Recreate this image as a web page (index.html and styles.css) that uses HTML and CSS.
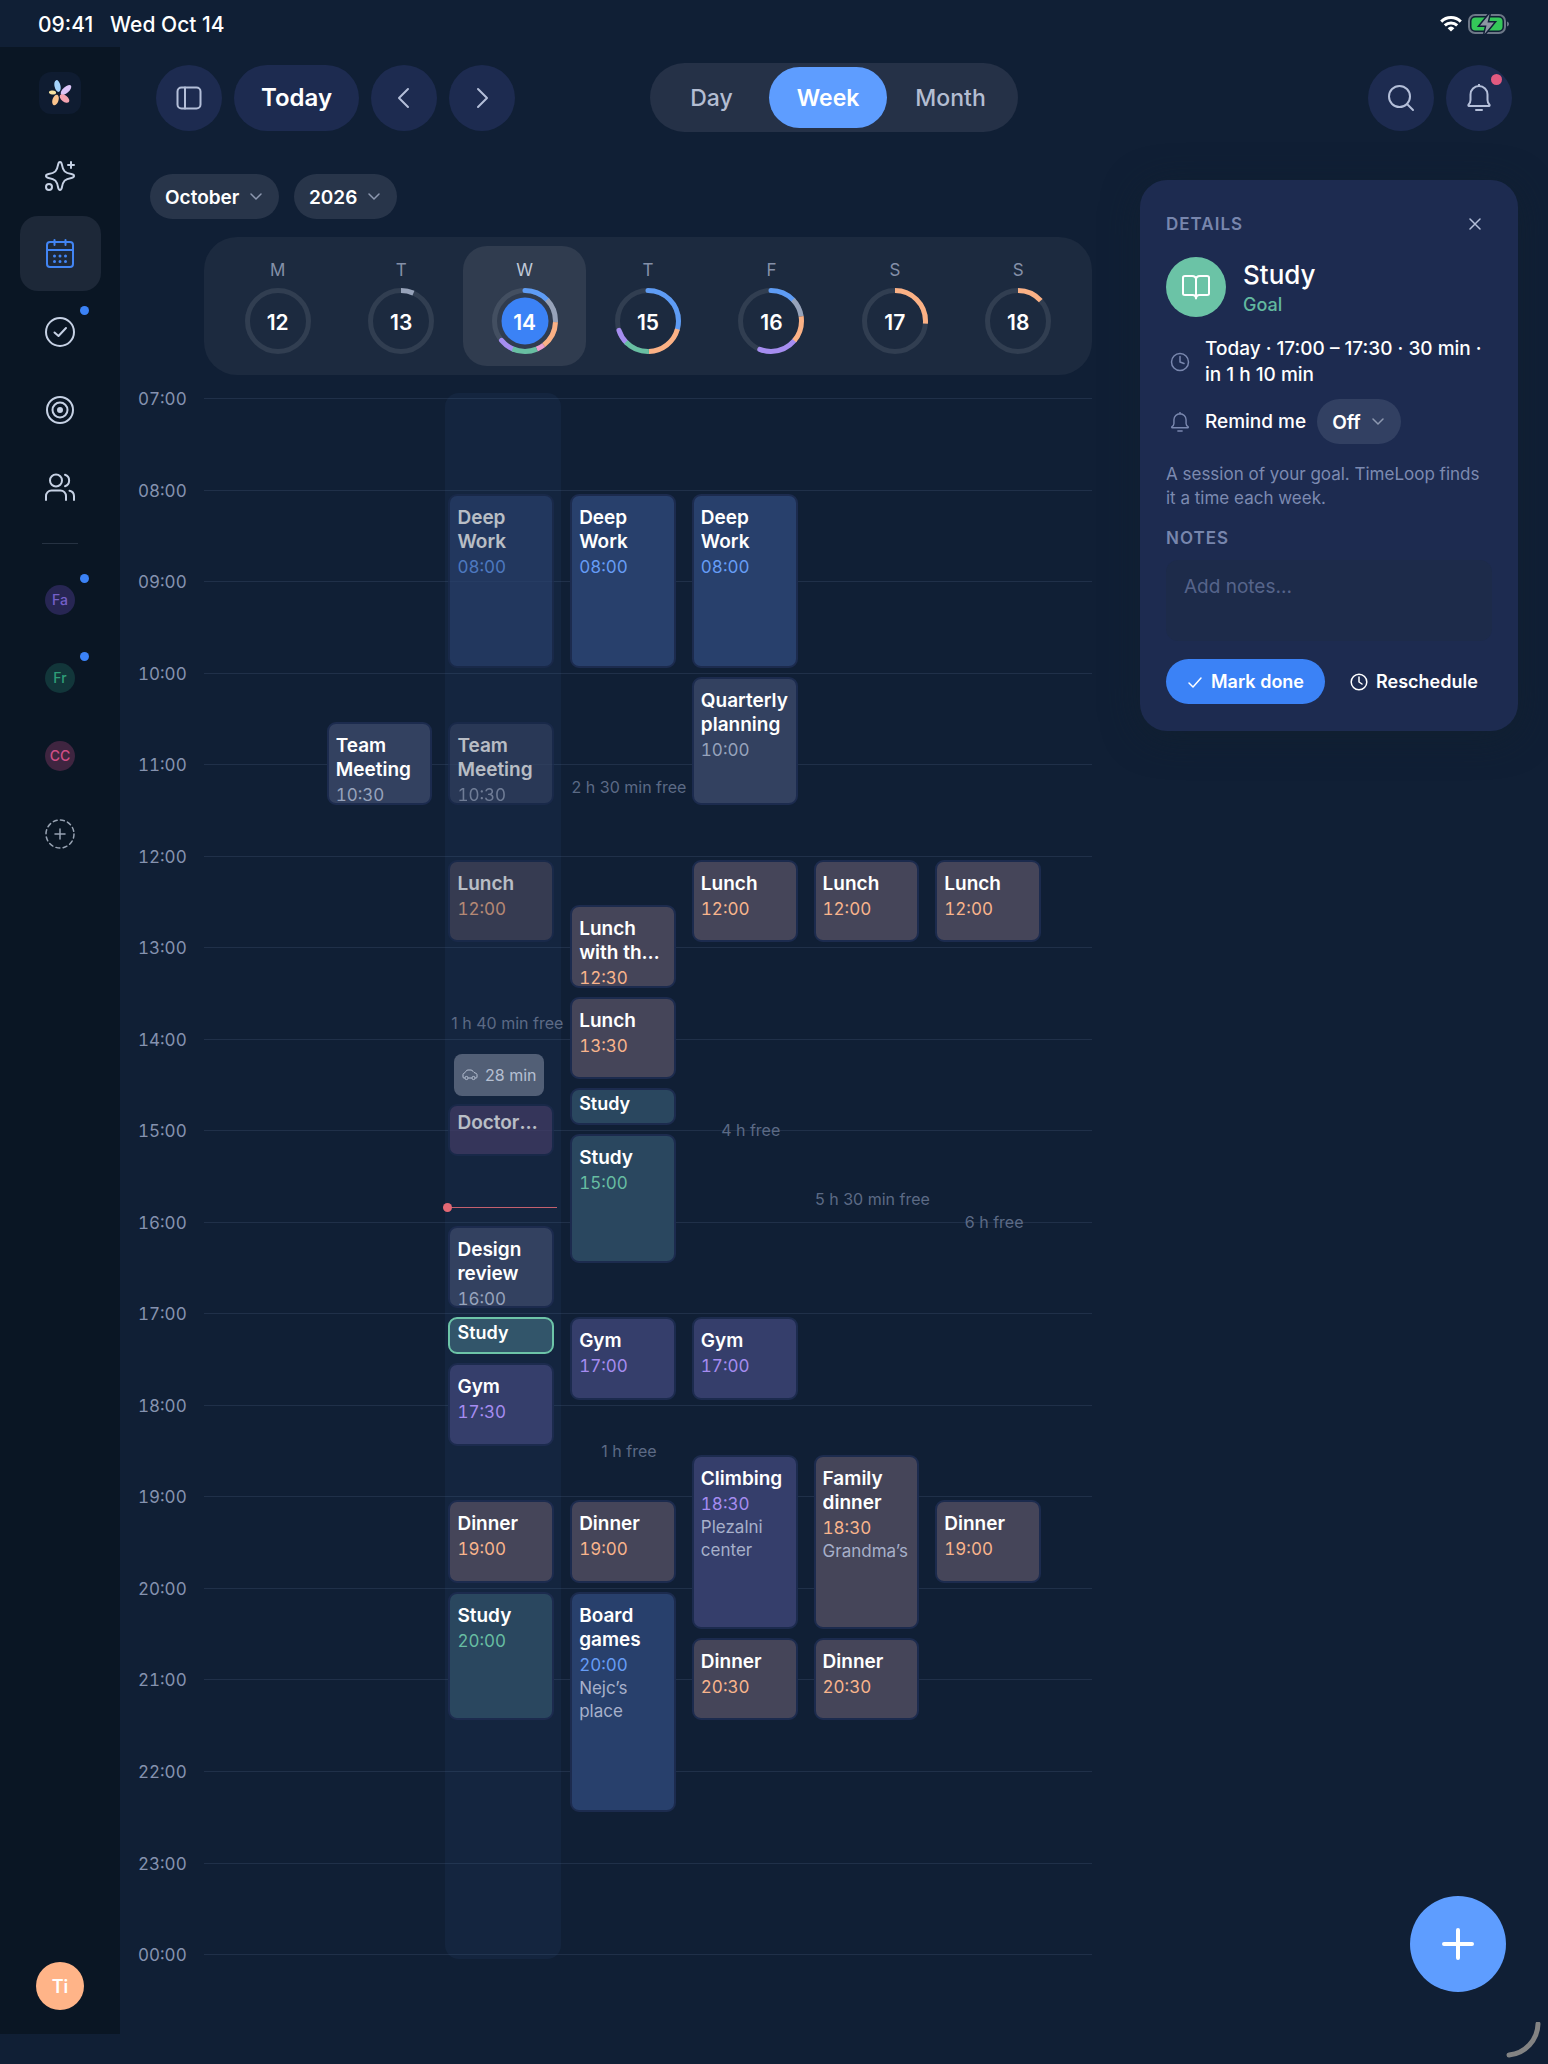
FILE: index.html
```html
<!DOCTYPE html>
<html lang="en">
<head>
<meta charset="utf-8">
<meta name="viewport" content="width=device-width, initial-scale=1">
<title>TimeLoop – Week</title>
<link rel="stylesheet" href="styles.css">
</head>
<body>
<div class="status-bar">
  <span class="status-time">09:41</span>
  <span class="status-date">Wed Oct 14</span>
  <span class="status-icons">
    <svg width="22" height="16" viewBox="0 0 22 16" fill="none" stroke="#fff" stroke-width="3" aria-label="Wi-Fi"><path d="M1.2 5.6a14 14 0 0 1 19.6 0"/><path d="M4.8 9.4a9 9 0 0 1 12.4 0"/><path d="M11 15.6 7.6 12.2a5 5 0 0 1 6.8 0z" fill="#fff" stroke="none"/></svg>
    <svg width="42" height="22" viewBox="0 0 42 22" aria-label="Battery charging"><rect x="1" y="2" width="36" height="18" rx="6" fill="none" stroke="#6d7787" stroke-width="2"/><rect x="3.500" y="4.500" width="31" height="13" rx="4" fill="#34c759"/><path d="M39 8.500v5c1.300-.5 2-1.400 2-2.500s-.7-2-2-2.500z" fill="#6d7787"/><path d="M21.500 1 12 12.500h6.500L16.500 21 26 9.500h-6.500z" fill="#8d96a3" stroke="#111f37" stroke-width="3" paint-order="stroke"/></svg>
  </span>
</div>

<div class="app">
  <nav class="sidebar" aria-label="Main">
    <a class="logo" href="#" aria-label="TimeLoop">
      <svg width="26" height="26" viewBox="0 0 26 26"><ellipse cx="10.500" cy="6" rx="3" ry="6" transform="rotate(-12 10.500 6)" fill="#a5d3fb"/><ellipse cx="19" cy="10" rx="6.600" ry="3" transform="rotate(-42 19 10)" fill="#dcc4f6"/><ellipse cx="17.500" cy="18.500" rx="5.600" ry="3.200" transform="rotate(38 17.500 18.500)" fill="#f4a3b0"/><ellipse cx="8.500" cy="20" rx="3" ry="5.400" transform="rotate(18 8.500 20)" fill="#fbc48d"/><ellipse cx="5.500" cy="12.500" rx="3.600" ry="2" transform="rotate(8 5.500 12.500)" fill="#f6e3a1"/></svg>
    </a>
    <a class="nav-item" href="#" aria-label="Assistant">
      <svg class="icon" width="32" height="32" viewBox="0 0 32 32"><path d="M16 2c1.200 0 1.600 1 1.900 2.600 1.100 6.400 3 8.400 9.500 9.500 1.600.3 2.600.7 2.600 1.900s-1 1.600-2.600 1.900c-6.500 1.100-8.400 3.100-9.500 9.500C17.600 29 17.200 30 16 30s-1.600-1-1.900-2.600c-1.100-6.400-3-8.400-9.500-9.500C3 17.600 2 17.200 2 16s1-1.600 2.600-1.900c6.500-1.100 8.400-3.100 9.500-9.500C14.400 3 14.800 2 16 2z"/><path d="M27 2v6M24 5h6"/><circle cx="5" cy="27" r="3"/></svg>
    </a>
    <a class="nav-item is-active" href="#" aria-label="Calendar" aria-current="page">
      <svg class="icon" width="32" height="32" viewBox="0 0 32 32"><rect x="3" y="4" width="26" height="25" rx="3"/><path d="M3 12h26M10.500 2v5M21.500 2v5"/><path stroke-width="3" d="M10.500 18h0M16 18h0M21.500 18h0M10.500 23.500h0M16 23.500h0M21.500 23.500h0"/></svg>
    </a>
    <a class="nav-item" href="#" aria-label="Tasks">
      <svg class="icon" width="32" height="32" viewBox="0 0 32 32"><circle cx="16" cy="16" r="14"/><path d="m10.500 16.500 4 3.500 7.500-8"/></svg>
      <span class="dot"></span>
    </a>
    <a class="nav-item" href="#" aria-label="Goals">
      <svg class="icon" width="32" height="32" viewBox="0 0 32 32"><circle cx="16" cy="16" r="13"/><circle cx="16" cy="16" r="7.500"/><circle cx="16" cy="16" r="2" fill="currentColor"/></svg>
    </a>
    <a class="nav-item" href="#" aria-label="People">
      <svg class="icon" width="32" height="32" viewBox="0 0 32 32"><circle cx="12" cy="8.500" r="6"/><path d="M2 28v-4a5.500 5.500 0 0 1 5.500-5.500h9A5.500 5.500 0 0 1 22 24v4M21 2.800a6 6 0 0 1 0 11.400M25.500 18.700A5.500 5.500 0 0 1 30 24v4"/></svg>
    </a>
    <hr class="divider">
    <a class="nav-item" href="#"><span class="group group--purple">Fa</span><span class="dot"></span></a>
    <a class="nav-item" href="#"><span class="group group--green">Fr</span><span class="dot"></span></a>
    <a class="nav-item" href="#"><span class="group group--pink">CC</span></a>
    <button class="nav-item nav-item--add" type="button" aria-label="Add group">
      <svg class="icon icon--thin" width="32" height="32" viewBox="0 0 32 32"><circle cx="16" cy="16" r="14" stroke-dasharray="4 3.330"/><path d="M16 11v10M11 16h10"/></svg>
    </button>
    <a class="avatar" href="#">Ti</a>
  </nav>

  <main class="main">
    <header class="toolbar">
      <div class="toolbar-group">
        <button class="round-btn" type="button" aria-label="Toggle sidebar"><svg class="icon" width="26" height="26" viewBox="0 0 26 26"><rect x="1.500" y="2.500" width="23" height="21" rx="4"/><path d="M9 2.500v21"/></svg></button>
        <button class="round-btn round-btn--text" type="button">Today</button>
        <button class="round-btn" type="button" aria-label="Previous week"><svg class="icon" width="26" height="26" viewBox="0 0 26 26"><path d="m17 4-9 9 9 9"/></svg></button>
        <button class="round-btn" type="button" aria-label="Next week"><svg class="icon" width="26" height="26" viewBox="0 0 26 26"><path d="m9 4 9 9-9 9"/></svg></button>
      </div>
      <div class="segmented" role="group" aria-label="View">
        <button type="button">Day</button>
        <button type="button" class="is-selected" aria-pressed="true">Week</button>
        <button type="button">Month</button>
      </div>
      <div class="toolbar-group toolbar-group--end">
        <button class="round-btn" type="button" aria-label="Search"><svg class="icon" width="28" height="28" viewBox="0 0 28 28"><circle cx="12.500" cy="12.500" r="10.500"/><path d="m20 20 6 6"/></svg></button>
        <button class="round-btn" type="button" aria-label="Notifications"><svg class="icon" width="28" height="28" viewBox="0 0 28 28"><path d="M14 0v2M4 22h20c.7 0 .8-.8.400-1.300C23 19 22.500 17.500 22.500 16v-5.500a8.500 8.500 0 0 0-17 0V16c0 1.500-.5 3-1.900 4.700-.4.500-.3 1.300.4 1.300zM11 26h6"/></svg><span class="alert-dot"></span></button>
      </div>
    </header>

    <div class="content">
      <section class="calendar" aria-label="Week calendar">
        <div class="period">
          <span class="select select--month"><select aria-label="Month"><option>October</option></select><svg class="chevron" width="12" height="8" viewBox="0 0 12 8"><path d="m1 1 5 5 5-5"/></svg></span>
          <span class="select select--year"><select aria-label="Year"><option>2026</option></select><svg class="chevron" width="12" height="8" viewBox="0 0 12 8"><path d="m1 1 5 5 5-5"/></svg></span>
        </div>

        <div class="week-strip">
          <button class="day" type="button"><span class="day-name">M</span><span class="ring"><svg viewBox="0 0 66 66"><circle class="track" cx="33" cy="33" r="30.500"/></svg><span class="day-num">12</span></span></button>
          <button class="day" type="button"><span class="day-name">T</span><span class="ring"><svg viewBox="0 0 66 66"><circle class="track" cx="33" cy="33" r="30.500"/><circle class="arc grey" cx="33" cy="33" r="30.500" pathLength="1000" stroke-dasharray="67 933"/></svg><span class="day-num">13</span></span></button>
          <button class="day is-today" type="button" aria-current="date"><span class="day-name">W</span><span class="ring"><svg viewBox="0 0 66 66"><circle class="track" cx="33" cy="33" r="30.500"/><circle class="arc blue round" cx="33" cy="33" r="30.500" pathLength="1000" stroke-dasharray="128 872"/><circle class="arc purple round" cx="33" cy="33" r="30.500" pathLength="1000" stroke-dasharray="80 920" stroke-dashoffset="-560"/><circle class="arc grey" cx="33" cy="33" r="30.500" pathLength="1000" stroke-dasharray="128 872" stroke-dashoffset="-128"/><circle class="arc orange" cx="33" cy="33" r="30.500" pathLength="1000" stroke-dasharray="139 861" stroke-dashoffset="-256"/><circle class="arc pink" cx="33" cy="33" r="30.500" pathLength="1000" stroke-dasharray="42 958" stroke-dashoffset="-395"/><circle class="arc green" cx="33" cy="33" r="30.500" pathLength="1000" stroke-dasharray="130 870" stroke-dashoffset="-437"/><circle cx="33" cy="33" r="23.500" fill="#3b82f6"/></svg><span class="day-num">14</span></span></button>
          <button class="day" type="button"><span class="day-name">T</span><span class="ring"><svg viewBox="0 0 66 66"><circle class="track" cx="33" cy="33" r="30.500"/><circle class="arc blue round" cx="33" cy="33" r="30.500" pathLength="1000" stroke-dasharray="293 707"/><circle class="arc purple round" cx="33" cy="33" r="30.500" pathLength="1000" stroke-dasharray="76 924" stroke-dashoffset="-624"/><circle class="arc orange" cx="33" cy="33" r="30.500" pathLength="1000" stroke-dasharray="202 798" stroke-dashoffset="-293"/><circle class="arc green" cx="33" cy="33" r="30.500" pathLength="1000" stroke-dasharray="134 866" stroke-dashoffset="-495"/></svg><span class="day-num">15</span></span></button>
          <button class="day" type="button"><span class="day-name">F</span><span class="ring"><svg viewBox="0 0 66 66"><circle class="track" cx="33" cy="33" r="30.500"/><circle class="arc blue round" cx="33" cy="33" r="30.500" pathLength="1000" stroke-dasharray="128 872"/><circle class="arc purple round" cx="33" cy="33" r="30.500" pathLength="1000" stroke-dasharray="198 802" stroke-dashoffset="-362"/><circle class="arc grey" cx="33" cy="33" r="30.500" pathLength="1000" stroke-dasharray="98 902" stroke-dashoffset="-128"/><circle class="arc orange" cx="33" cy="33" r="30.500" pathLength="1000" stroke-dasharray="136 864" stroke-dashoffset="-226"/></svg><span class="day-num">16</span></span></button>
          <button class="day" type="button"><span class="day-name">S</span><span class="ring"><svg viewBox="0 0 66 66"><circle class="track" cx="33" cy="33" r="30.500"/><circle class="arc orange" cx="33" cy="33" r="30.500" pathLength="1000" stroke-dasharray="264 736"/></svg><span class="day-num">17</span></span></button>
          <button class="day" type="button"><span class="day-name">S</span><span class="ring"><svg viewBox="0 0 66 66"><circle class="track" cx="33" cy="33" r="30.500"/><circle class="arc orange" cx="33" cy="33" r="30.500" pathLength="1000" stroke-dasharray="134 866"/></svg><span class="day-num">18</span></span></button>
        </div>

        <div class="timeline">
          <div class="hours">
            <div class="hour"><span>07:00</span></div><div class="hour"><span>08:00</span></div><div class="hour"><span>09:00</span></div><div class="hour"><span>10:00</span></div><div class="hour"><span>11:00</span></div><div class="hour"><span>12:00</span></div><div class="hour"><span>13:00</span></div><div class="hour"><span>14:00</span></div><div class="hour"><span>15:00</span></div><div class="hour"><span>16:00</span></div><div class="hour"><span>17:00</span></div><div class="hour"><span>18:00</span></div><div class="hour"><span>19:00</span></div><div class="hour"><span>20:00</span></div><div class="hour"><span>21:00</span></div><div class="hour"><span>22:00</span></div><div class="hour"><span>23:00</span></div><div class="hour hour--end"><span>00:00</span></div>
          </div>

          <div class="days">
            <div class="column"></div>

            <div class="column">
              <article class="event grey" style="--from:43;--to:55"><h3>Team Meeting</h3><time>10:30</time></article>
            </div>

            <div class="column column--today">
              <article class="event blue past" style="--from:13;--to:37"><h3>Deep Work</h3><time>08:00</time></article>
              <article class="event grey past" style="--from:43;--to:55"><h3>Team Meeting</h3><time>10:30</time></article>
              <article class="event orange past" style="--from:61;--to:73"><h3>Lunch</h3><time>12:00</time></article>
              <p class="free" style="--from:80;--to:86">1 h 40 min free</p>
              <div class="travel" style="--from:87;--to:93"><svg width="16" height="12" viewBox="0 0 16 12"><path d="M2.700 9H1.800C1.200 9 1 8.600 1 8V5.500C1 4 3 4.500 4 2.200 4.300 1.400 5 1 6 1h3c1.500 0 2.500 2.500 4 3 1.500.3 2 .8 2 2V8c0 .6-.2 1-.8 1h-.9M6.300 9h3.400"/><circle cx="4.500" cy="9" r="1.600"/><circle cx="11.500" cy="9" r="1.600"/></svg>28 min</div>
              <article class="event pink past event--mid" style="--from:93;--to:101"><h3>Doctor appointment</h3></article>
              <div class="now" style="--from:107;--to:108"></div>
              <article class="event grey" style="--from:109;--to:121"><h3>Design review</h3><time>16:00</time></article>
              <article class="event green event--short is-selected" style="--from:121;--to:127"><h3>Study</h3></article>
              <article class="event purple" style="--from:127;--to:139"><h3>Gym</h3><time>17:30</time></article>
              <article class="event orange" style="--from:145;--to:157"><h3>Dinner</h3><time>19:00</time></article>
              <article class="event green" style="--from:157;--to:175"><h3>Study</h3><time>20:00</time></article>
            </div>

            <div class="column">
              <article class="event blue" style="--from:13;--to:37"><h3>Deep Work</h3><time>08:00</time></article>
              <p class="free" style="--from:49;--to:55">2 h 30 min free</p>
              <article class="event orange" style="--from:67;--to:79"><h3>Lunch with the team</h3><time>12:30</time></article>
              <article class="event orange" style="--from:79;--to:91"><h3>Lunch</h3><time>13:30</time></article>
              <article class="event green event--short" style="--from:91;--to:97"><h3>Study</h3></article>
              <article class="event green" style="--from:97;--to:115"><h3>Study</h3><time>15:00</time></article>
              <article class="event purple" style="--from:121;--to:133"><h3>Gym</h3><time>17:00</time></article>
              <p class="free" style="--from:136;--to:142">1 h free</p>
              <article class="event orange" style="--from:145;--to:157"><h3>Dinner</h3><time>19:00</time></article>
              <article class="event blue" style="--from:157;--to:187"><h3>Board games</h3><time>20:00</time><p>Nejc’s place</p></article>
            </div>

            <div class="column">
              <article class="event blue" style="--from:13;--to:37"><h3>Deep Work</h3><time>08:00</time></article>
              <article class="event grey" style="--from:37;--to:55"><h3>Quarterly planning</h3><time>10:00</time></article>
              <article class="event orange" style="--from:61;--to:73"><h3>Lunch</h3><time>12:00</time></article>
              <p class="free" style="--from:94;--to:100">4 h free</p>
              <article class="event purple" style="--from:121;--to:133"><h3>Gym</h3><time>17:00</time></article>
              <article class="event purple" style="--from:139;--to:163"><h3>Climbing</h3><time>18:30</time><p>Plezalni center</p></article>
              <article class="event orange" style="--from:163;--to:175"><h3>Dinner</h3><time>20:30</time></article>
            </div>

            <div class="column">
              <article class="event orange" style="--from:61;--to:73"><h3>Lunch</h3><time>12:00</time></article>
              <p class="free" style="--from:103;--to:109">5 h 30 min free</p>
              <article class="event orange" style="--from:139;--to:163"><h3>Family dinner</h3><time>18:30</time><p>Grandma’s</p></article>
              <article class="event orange" style="--from:163;--to:175"><h3>Dinner</h3><time>20:30</time></article>
            </div>

            <div class="column">
              <article class="event orange" style="--from:61;--to:73"><h3>Lunch</h3><time>12:00</time></article>
              <p class="free" style="--from:106;--to:112">6 h free</p>
              <article class="event orange" style="--from:145;--to:157"><h3>Dinner</h3><time>19:00</time></article>
            </div>
          </div>
        </div>
      </section>

      <aside class="details">
        <div class="details-head">
          <h2 class="overline">Details</h2>
          <button class="close" type="button" aria-label="Close"><svg class="icon" width="12" height="12" viewBox="0 0 12 12"><path d="m1 1 10 10M11 1 1 11"/></svg></button>
        </div>
        <div class="details-title">
          <span class="badge"><svg class="icon" width="28" height="28" viewBox="0 0 28 28"><path d="M14 6.500C14 4 12 3 10 3H3c-1 0-2 .5-2 1.500v16c0 1 .8 1.500 2 1.500h7.500c2 0 3.500 1 3.500 3.500 0-2.500 1.500-3.500 3.500-3.500H25c1.200 0 2-.5 2-1.500v-16C27 3.500 26 3 25 3h-7c-2 0-4 1-4 3.500zV25"/></svg></span>
          <div><h1>Study</h1><p class="kind">Goal</p></div>
        </div>
        <div class="row">
          <svg class="icon icon--thin row-icon" width="20" height="20" viewBox="0 0 20 20"><circle cx="10" cy="10" r="8.500"/><path d="M10 4.500V10l4 1.500"/></svg>
          <p>Today · 17:00 – 17:30 · 30 min · in 1 h 10 min</p>
        </div>
        <div class="row row--remind">
          <svg class="icon icon--thin row-icon" width="20" height="20" viewBox="0 0 28 28"><path stroke-width="2" d="M14 0v3M3 22h22c.7 0 .8-.8.400-1.300C23 19 22.500 17.500 22.500 16v-5a8.500 8.500 0 0 0-17 0v5c0 1.500-.5 3-2.900 4.700-.4.500-.3 1.300.4 1.300zM11 26.500h6"/></svg>
          <label for="remind">Remind me</label>
          <span class="select select--remind"><select id="remind"><option>Off</option></select><svg class="chevron" width="12" height="8" viewBox="0 0 12 8"><path d="m1 1 5 5 5-5"/></svg></span>
        </div>
        <p class="hint">A session of your goal. TimeLoop finds it a time each week.</p>
        <label class="overline overline--notes" for="notes">Notes</label>
        <textarea id="notes" placeholder="Add notes..."></textarea>
        <div class="actions">
          <button class="btn btn--primary" type="button"><svg class="icon" width="16" height="16" viewBox="0 0 16 16"><path d="m2 9 4 4 8-9"/></svg>Mark done</button>
          <button class="btn" type="button"><svg class="icon" width="18" height="18" viewBox="0 0 18 18"><circle cx="9" cy="9" r="7.800"/><path d="M9 4v5l3 2"/></svg>Reschedule</button>
        </div>
      </aside>
    </div>
  </main>
</div>

<button class="fab" type="button" aria-label="New event"><svg width="34" height="34" viewBox="0 0 34 34"><path d="M17 3v28M3 17h28"/></svg></button>
<svg class="corner" width="42" height="42" viewBox="0 0 42 42" aria-hidden="true"><path d="M32 2A32 32 0 0 1 3 33"/></svg>
</body>
</html>
```
FILE: styles.css
```css
* {
  box-sizing: border-box;
}

:root {
  --bg: #101f35;
  --surface: #1d2b50;
  --text: #fff;
  --soft: #b4bfd9;
  --muted: #8592af;
  --accent: #5e9dff;
}

body {
  margin: 0;
  min-height: 100vh;
  display: flex;
  flex-direction: column;
  padding-bottom: 30px;
  background: var(--bg);
  color: var(--text);
  font-family: Inter, "Liberation Sans", sans-serif;
  font-size: 18px;
}

h1, h2, h3, p {
  margin: 0;
  font-weight: 500;
}

button, select, textarea {
  font: inherit;
  color: inherit;
  border: 0;
  background: none;
  padding: 0;
  margin: 0;
}

a {
  color: inherit;
  text-decoration: none;
}

.icon {
  display: block;
  flex: none;
  fill: none;
  stroke: currentColor;
  stroke-width: 2;
  stroke-linecap: round;
  stroke-linejoin: round;
}

.icon--thin {
  stroke-width: 1.5;
}

/* Status bar */
.status-bar {
  height: 47px;
  flex: none;
  display: flex;
  align-items: center;
  gap: 17px;
  padding: 1px 38px 0;
  font-size: 21px;
  font-weight: 500;
}

.status-icons {
  margin-left: auto;
  display: flex;
  align-items: center;
  gap: 6px;
}

.app {
  flex: 1;
  display: flex;
}

/* Sidebar */
.sidebar {
  width: 120px;
  flex: none;
  display: flex;
  flex-direction: column;
  align-items: center;
  gap: 3px;
  padding: 25px 0 24px;
  background: #0a1624;
  color: #c6d1e4;
}

.logo {
  width: 42px;
  height: 42px;
  margin-bottom: 21px;
  display: grid;
  place-items: center;
  border-radius: 12px;
  background: #0f1c31;
}

.nav-item {
  position: relative;
  width: 81px;
  height: 75px;
  display: grid;
  place-items: center;
  border-radius: 18px;
}

.nav-item.is-active {
  background: #1d2838;
  color: #4285f4;
}

.nav-item--add {
  color: #98a3b3;
}

.dot {
  position: absolute;
  top: 12px;
  right: 12px;
  width: 9px;
  height: 9px;
  border-radius: 50%;
  background: #3b82f6;
}

.divider {
  width: 36px;
  height: 1px;
  margin: 15px 0;
  border: 0;
  background: #263242;
}

.group {
  width: 30px;
  height: 30px;
  display: grid;
  place-items: center;
  border-radius: 50%;
  font-size: 14px;
  font-weight: 500;
}

.group--purple { background: #272653; color: #7560c8; }
.group--green { background: #12363a; color: #2f9e78; }
.group--pink { background: #3f2540; color: #cf4f87; }

.avatar {
  width: 48px;
  height: 48px;
  margin-top: auto;
  display: grid;
  place-items: center;
  border-radius: 50%;
  background: #ffb488;
  color: #fff;
  font-size: 18px;
  font-weight: 600;
}

/* Toolbar */
.main {
  flex: 1;
  min-width: 0;
  display: flex;
  flex-direction: column;
  gap: 42px;
  padding: 16px 30px 0 18px;
}

.toolbar {
  display: grid;
  grid-template-columns: 1fr auto 1fr;
  align-items: center;
  padding: 0 6px 0 18px;
}

.toolbar-group {
  display: flex;
  gap: 12px;
}

.toolbar-group--end {
  justify-content: flex-end;
}

.round-btn {
  position: relative;
  width: 66px;
  height: 66px;
  display: grid;
  place-items: center;
  border-radius: 33px;
  background: var(--surface);
  color: var(--soft);
}

.round-btn--text {
  width: 125px;
  color: var(--text);
  font-size: 24px;
  font-weight: 600;
}

.alert-dot {
  position: absolute;
  top: 9px;
  right: 10px;
  width: 11px;
  height: 11px;
  border-radius: 50%;
  background: #e25a80;
}

.segmented {
  display: flex;
  padding: 4px;
  border-radius: 35px;
  background: #253147;
  color: #b3bdd2;
  font-size: 23px;
  font-weight: 500;
}

.segmented button {
  height: 61px;
  padding: 0 28px;
  border-radius: 31px;
}

.segmented button:first-child {
  padding-left: 36px;
  padding-right: 36px;
}

.segmented .is-selected {
  background: var(--accent);
  color: #fff;
  font-weight: 600;
}

.content {
  flex: 1;
  display: grid;
  grid-template-columns: minmax(0, 1fr) 378px;
  gap: 48px;
}

/* Calendar */
.calendar {
  display: flex;
  flex-direction: column;
  padding-bottom: 80px;
}

.period {
  display: flex;
  gap: 15px;
  margin: 0 0 18px 12px;
}

.select {
  position: relative;
  display: block;
}

.select select {
  width: 100%;
  height: 45px;
  padding: 2px 0 0 15px;
  appearance: none;
  border-radius: 23px;
  background: #28354a;
  font-size: 19px;
  font-weight: 600;
}

.select--month { width: 129px; }
.select--year { width: 103px; }
.select--remind { width: 84px; }
.select--remind select { background: #324062; }

.chevron {
  position: absolute;
  top: 19px;
  right: 17px;
  pointer-events: none;
  fill: none;
  stroke: #8d98b0;
  stroke-width: 1.5;
  stroke-linecap: round;
}

.week-strip {
  display: grid;
  grid-template-columns: repeat(7, minmax(0, 1fr));
  margin: 0 0 23px 66px;
  padding: 9px 12px;
  border-radius: 33px;
  background: #1c2a3f;
}

.day {
  height: 120px;
  display: flex;
  flex-direction: column;
  align-items: center;
  gap: 6px;
  padding-top: 12px;
  border-radius: 24px;
}

.day.is-today {
  background: #303c4f;
}

.day-name {
  font-size: 17px;
  line-height: 24px;
  color: #8490a8;
}

.is-today .day-name {
  color: #c0c9d8;
}

.ring {
  width: 66px;
  height: 66px;
  display: grid;
}

.ring > * {
  grid-area: 1 / 1;
  place-self: center;
}

.ring svg {
  width: 66px;
  height: 66px;
}

.day-num {
  padding-top: 2px;
  font-size: 21px;
  font-weight: 600;
}

.track, .arc {
  fill: none;
  stroke-width: 5;
}

.track { stroke: #313e51; }
.is-today .track { stroke: #434f61; }

.arc {
  transform: rotate(-90deg);
  transform-origin: 33px 33px;
}

.arc.round { stroke-linecap: round; }
.arc.blue { stroke: #5e9cf5; }
.arc.grey { stroke: #97a3ba; }
.arc.orange { stroke: #fbb185; }
.arc.pink { stroke: #ec9fd0; }
.arc.green { stroke: #68bfa2; }
.arc.purple { stroke: #a58df0; }

/* Timeline: 17 hours, each split into 12 five-minute rows */
.timeline {
  flex: 1;
  min-height: 1360px;
  display: grid;
}

.timeline > * {
  grid-area: 1 / 1;
  min-height: 0;
}

.hours {
  display: flex;
  flex-direction: column;
}

.hour {
  flex: 1 1 0;
  display: flex;
  align-items: flex-start;
  gap: 18px;
  font-size: 17px;
  line-height: 24px;
  font-variant-numeric: tabular-nums;
  color: var(--muted);
}

.hour::after {
  content: "";
  flex: 1;
  height: 1px;
  background: #203049;
}

.hour span {
  width: 48px;
  margin-top: -11px;
}

.hour--end {
  flex: none;
  height: 0;
}

.days {
  display: grid;
  grid-template-columns: repeat(7, minmax(0, 1fr));
  margin: 0 36px 0 66px;
}

.column {
  contain: size;
  display: grid;
  grid-template-columns: 100%;
  grid-template-rows: repeat(204, minmax(0, 1fr));
}

.column > * {
  grid-column: 1;
  grid-row: var(--from) / var(--to);
}

.column--today::before {
  content: "";
  grid-column: 1;
  grid-row: 1 / -1;
  margin: -5px 8px -5px -2px;
  border-radius: 14px;
  background: rgba(56, 98, 155, 0.1);
}

.event {
  overflow: hidden;
  margin: 4px 15px 5px 1px;
  padding: 10px 4px 0 7px;
  border: 2px solid #1c2b4e;
  border-radius: 9px;
  background: var(--fill);
  font-size: 17px;
}

.event h3 {
  display: -webkit-box;
  -webkit-box-orient: vertical;
  -webkit-line-clamp: 2;
  overflow: hidden;
  font-size: 19px;
  line-height: 24px;
  font-weight: 600;
}

.event time {
  display: block;
  margin-top: 1px;
  line-height: 24px;
  font-variant-numeric: tabular-nums;
  color: var(--ink);
}

.event p {
  line-height: 23px;
  font-weight: 400;
  color: #a7b0ca;
}

.event.blue { --fill: #28406c; --ink: #669cf5; }
.event.grey { --fill: #334160; --ink: #97a3bc; }
.event.orange { --fill: #454559; --ink: #f8b48c; }
.event.green { --fill: #2a475f; --ink: #67bda2; }
.event.purple { --fill: #353e6b; --ink: #a58cf0; }
.event.pink { --fill: #443c66; --ink: #ec9fd0; }

.event.past {
  opacity: 0.7;
}

.event--mid {
  padding-top: 5px;
}

.event--short {
  padding-top: 2px;
}

.event--mid h3, .event--short h3 {
  -webkit-line-clamp: 1;
}

.event--short h3 {
  font-size: 18px;
}

.event.is-selected {
  background: #32556a;
  border-color: #6dc4a8;
}

.free {
  place-self: center;
  margin-right: 2px;
  white-space: nowrap;
  font-size: 16px;
  line-height: 24px;
  font-weight: 400;
  color: #5c6a85;
}

.travel {
  display: flex;
  align-items: center;
  justify-content: center;
  gap: 7px;
  margin: 0 25px 4px 7px;
  border-radius: 8px;
  background: #525f76;
  color: #b6c0d2;
  font-size: 16px;
  white-space: nowrap;
}

.travel svg {
  fill: none;
  stroke: currentColor;
  stroke-width: 1;
}

.now {
  height: 1px;
  margin: 0 12px 0 0;
  background: #c4606e;
}

.now::before {
  content: "";
  display: block;
  width: 9px;
  height: 9px;
  margin: -4px 0 0 -4px;
  border-radius: 50%;
  background: #e46874;
}

/* Details card */
.details {
  align-self: start;
  display: flex;
  flex-direction: column;
  margin-top: 6px;
  padding: 27px 26px;
  border-radius: 27px;
  background: var(--surface);
  box-shadow: 0 6px 36px rgba(17, 33, 48, 0.8);
}

.details-head {
  display: flex;
  align-items: center;
  justify-content: space-between;
}

.overline {
  font-size: 17px;
  line-height: 24px;
  font-weight: 600;
  letter-spacing: 1px;
  text-transform: uppercase;
  color: #7886ad;
}

.close {
  width: 34px;
  height: 34px;
  display: grid;
  place-items: center;
  border-radius: 50%;
  color: var(--soft);
}

.close .icon {
  stroke-width: 1.5;
}

.details-title {
  display: flex;
  align-items: center;
  gap: 17px;
  margin-top: 16px;
}

.badge {
  width: 60px;
  height: 60px;
  display: grid;
  place-items: center;
  border-radius: 50%;
  background: #6bc3a6;
}

h1 {
  font-size: 26px;
  line-height: 36px;
}

.kind {
  font-size: 18px;
  line-height: 24px;
  color: #62b89f;
}

.row {
  display: flex;
  align-items: center;
  gap: 15px;
  margin-top: 19px;
  padding-left: 4px;
  font-size: 19px;
  line-height: 26px;
  font-weight: 500;
}

.row p {
  flex: 1;
}

.row-icon {
  color: #7987ae;
}

.row--remind {
  margin-top: 11px;
}

.row--remind .select {
  margin-left: -4px;
}

.hint {
  margin-top: 18px;
  font-size: 17px;
  line-height: 24px;
  font-weight: 400;
  color: #7c8ab0;
}

.overline--notes {
  margin-top: 16px;
}

textarea {
  height: 81px;
  margin-top: 10px;
  padding: 14px 18px;
  resize: none;
  border-radius: 12px;
  background: #1d2b4a;
  font-size: 19px;
  line-height: 26px;
}

textarea::placeholder {
  color: #56648a;
}

.actions {
  display: flex;
  gap: 4px;
  margin-top: 18px;
}

.btn {
  height: 45px;
  display: flex;
  align-items: center;
  gap: 8px;
  padding: 0 21px;
  border-radius: 23px;
  font-size: 18px;
  font-weight: 600;
  white-space: nowrap;
}

.btn--primary {
  background: #3b82f6;
}

.btn .icon {
  stroke-width: 1.5;
}

.fab {
  position: fixed;
  right: 42px;
  bottom: 72px;
  width: 96px;
  height: 96px;
  display: grid;
  place-items: center;
  border-radius: 50%;
  background: var(--accent);
}

.fab svg {
  stroke: #fff;
  stroke-width: 4;
  stroke-linecap: round;
}

.corner {
  position: fixed;
  right: 0;
  bottom: 0;
  fill: none;
  stroke: #838383;
  stroke-width: 5;
  stroke-linecap: round;
}
```
